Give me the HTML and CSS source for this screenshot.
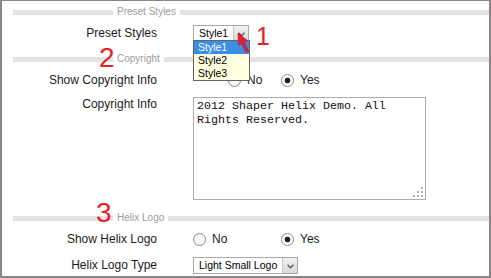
FILE: index.html
```html
<!DOCTYPE html>
<html lang="en">
<head>
    <meta charset="utf-8" />
    <title>Template Parameters</title>
    <link rel="stylesheet" href="styles.css">
</head>
<body>
    <div class="panel">
        <div class="spacer">
            <span class="rule rule-lead"></span><span class="legend">Preset Styles</span><span class="rule"></span>
        </div>
        <div class="row row-preset">
            <label class="label">Preset Styles</label>
            <div class="control">
                <div class="select select-small">
                    <span class="select-value">Style1</span>
                    <span class="select-btn"><svg width="7" height="5" viewBox="0 0 7 5"><polyline points="0.5,0.8 3.5,3.8 6.5,0.8" fill="none" stroke="#5a5a5a" stroke-width="1.4" /></svg></span>
                </div>
                <ul class="dropdown">
                    <li class="active">Style1</li>
                    <li>Style2</li>
                    <li>Style3</li>
                </ul>
            </div>
        </div>

        <div class="spacer spacer-gap">
            <span class="rule rule-lead"></span><span class="legend">Copyright</span><span class="rule"></span>
        </div>
        <div class="row">
            <label class="label">Show Copyright Info</label>
            <div class="choices choices-shifted">
                <label class="choice"><input type="radio" name="copyright" />No</label>
                <label class="choice"><input type="radio" name="copyright" checked />Yes</label>
            </div>
        </div>
        <div class="row row-top">
            <label class="label">Copyright Info</label>
            <div class="area">
                <textarea class="textarea">2012 Shaper Helix Demo. All Rights Reserved.</textarea>
                <svg class="grip" width="11" height="11" viewBox="0 0 11 11">
                    <rect x="9" y="1" width="2" height="2" />
                    <rect x="5" y="5" width="2" height="2" />
                    <rect x="9" y="5" width="2" height="2" />
                    <rect x="1" y="9" width="2" height="2" />
                    <rect x="5" y="9" width="2" height="2" />
                    <rect x="9" y="9" width="2" height="2" />
                </svg>
            </div>
        </div>

        <div class="spacer spacer-wide">
            <span class="rule rule-lead"></span><span class="legend">Helix Logo</span><span class="rule"></span>
        </div>
        <div class="row">
            <label class="label">Show Helix Logo</label>
            <div class="choices">
                <label class="choice"><input type="radio" name="logo" />No</label>
                <label class="choice"><input type="radio" name="logo" checked />Yes</label>
            </div>
        </div>
        <div class="row row-last">
            <label class="label">Helix Logo Type</label>
            <div class="select select-wide">
                <span class="select-value">Light Small Logo</span>
                <span class="select-btn"><svg width="7" height="5" viewBox="0 0 7 5"><polyline points="0.5,0.8 3.5,3.8 6.5,0.8" fill="none" stroke="#5a5a5a" stroke-width="1.4" /></svg></span>
            </div>
        </div>
    </div>

    <!-- annotations drawn on top of the screenshot -->
    <span class="mark mark-1">1</span>
    <span class="mark mark-2">2</span>
    <span class="mark mark-3">3</span>
    <svg class="cursor" width="16" height="24" viewBox="0 0 16 24">
        <polygon points="3,2 12.4,9.6 9.2,11.1 13.7,20.1 11.1,21.5 6.6,12.5 3.4,14" fill="#e3222a" stroke="#c01018" stroke-width="0.6" />
    </svg>
</body>
</html>
```

FILE: styles.css
```css
body, ul, li {
    margin: 0;
    padding: 0;
}

body {
    background: #fff;
    font: 12px "Liberation Sans", Arial, sans-serif;
    color: #1b1b1b;
}

.panel {
    width: 491px;
    height: 278px;
    box-sizing: border-box;
    border: 2px solid #8c8587;
    border-top-width: 1px;
    padding-top: 5px;
    overflow: hidden;
}

/* section headers */
.spacer {
    display: flex;
    align-items: center;
    height: 12px;
    margin-left: 11px;
}

    .spacer-gap {
        margin-top: 5px;
    }

    .spacer-wide {
        margin-top: 12px;
    }

.rule {
    flex: 1;
    height: 5px;
    background: #e4e4e4;
}

.rule-lead {
    flex: none;
    width: 100px;
}

.legend {
    padding: 0 4px;
    font-size: 10px;
    line-height: 12px;
    color: #9c9c9c;
}

/* rows */
.row {
    display: flex;
    align-items: center;
    height: 30px;
}

.row-top {
    align-items: flex-start;
    height: auto;
}

    .row-top .label {
        margin-top: 2px;
        line-height: 15px;
    }

.row-last {
    height: 22px;
}

.label {
    flex: none;
    width: 155px;
    margin-right: 36px;
    text-align: right;
}

.control {
    position: relative;
}

/* select boxes */
.select {
    display: flex;
    height: 16px;
    box-sizing: border-box;
    border: 1px solid #a9a9a9;
    background: #fff;
    font-size: 10.5px;
}

.select-small {
    width: 56px;
}

.select-wide {
    width: 105px;
    height: 17px;
}

.select-value {
    flex: 1;
    padding-left: 5px;
    line-height: 14px;
    white-space: nowrap;
    color: #000;
}

.select-btn {
    display: flex;
    align-items: center;
    justify-content: center;
    width: 15px;
    padding-top: 2px;
    box-sizing: border-box;
    border-left: 1px solid #c6c6c6;
    background: linear-gradient(to bottom, #f2f2f2 0%, #d9d9d9 100%);
}

.dropdown {
    position: absolute;
    left: 0;
    top: 15px;
    z-index: 2;
    width: 57px;
    box-sizing: border-box;
    border: 1px solid #646464;
    background: #ffffe1;
    list-style: none;
    font-size: 10.5px;
    color: #000;
}

    .dropdown li {
        height: 13px;
        line-height: 13px;
        padding-left: 4px;
    }

        .dropdown li.active {
            background: #3b8de6;
            color: #fff;
        }

/* radios */
.choices {
    display: flex;
}

.choices-shifted {
    padding-left: 35px;
}

.choice {
    display: flex;
    align-items: center;
    width: 88px;
}

.choices-shifted .choice:first-child {
    width: 53px;
}

.choice input {
    appearance: none;
    width: 13px;
    height: 13px;
    margin: 0 6px 0 0;
    box-sizing: border-box;
    border: 1px solid #8a8a8a;
    border-radius: 50%;
    background: radial-gradient(circle, #ffffff 0%, #ececec 100%);
}

    .choice input:checked {
        background: radial-gradient(circle, #1f1f1f 0, #1f1f1f 2.6px, #ffffff 3.2px);
    }

/* textarea */
.area {
    position: relative;
    margin-top: 2px;
}

.textarea {
    display: block;
    width: 233px;
    height: 103px;
    margin: 0;
    box-sizing: border-box;
    border: 1px solid #adadad;
    padding: 1px 3px;
    font: 11.67px/14px "Liberation Mono", "Courier New", monospace;
    color: #111;
    resize: none;
    overflow: hidden;
}

.grip {
    position: absolute;
    right: 3px;
    bottom: 3px;
    fill: #b4b4b4;
}

/* red annotation marks */
.mark {
    position: absolute;
    line-height: 1;
    color: #e3222a;
}

.mark-1 {
    left: 256px;
    top: 24px;
    font-size: 25px;
}

.mark-2 {
    left: 99px;
    top: 44px;
    font-size: 28px;
}

.mark-3 {
    left: 96px;
    top: 199px;
    font-size: 28px;
}

.cursor {
    position: absolute;
    left: 235px;
    top: 31px;
    z-index: 3;
}
```
